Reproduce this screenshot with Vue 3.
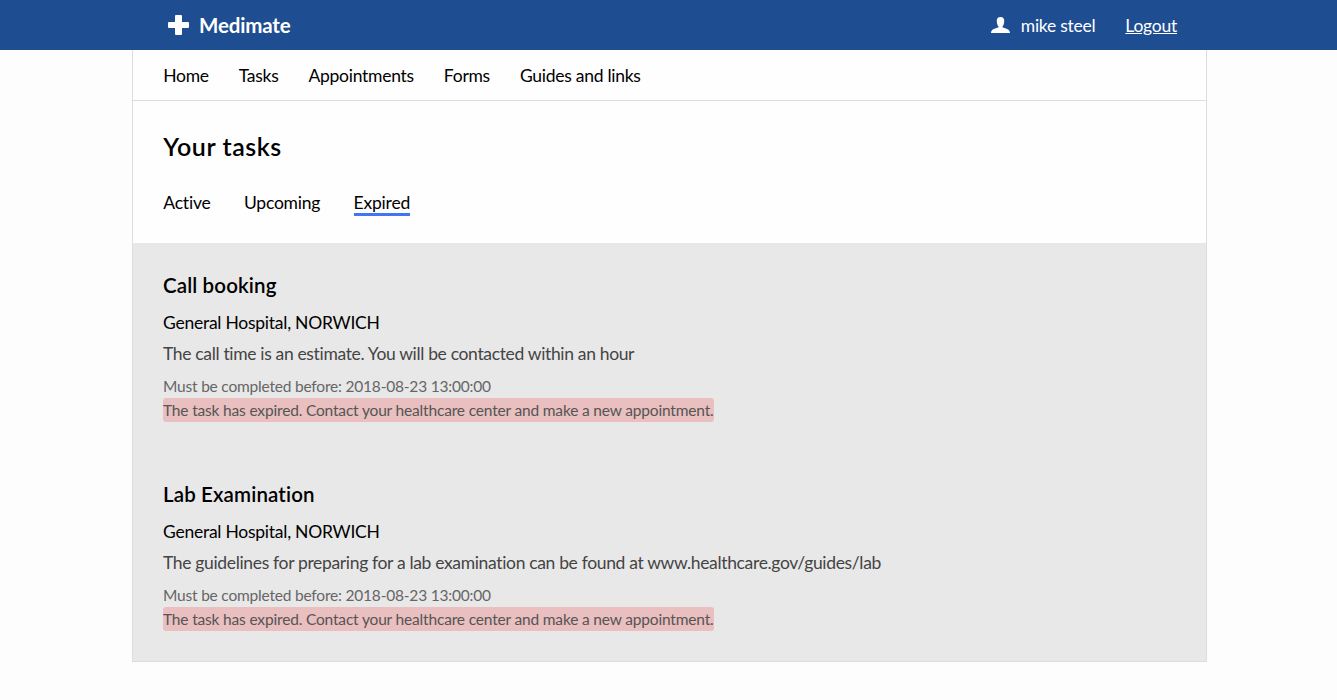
<script setup>
const links = ['Home', 'Tasks', 'Appointments', 'Forms', 'Guides and links']
const tabs = ['Active', 'Upcoming', 'Expired']
const tasks = [
  { title: 'Call booking', text: 'The call time is an estimate. You will be contacted within an hour' },
  { title: 'Lab Examination', text: 'The guidelines for preparing for a lab examination can be found at www.healthcare.gov/guides/lab' }
]
</script>

<template>
  <div class="page">
    <header class="top">
      <div class="brand">
        <svg width="21" height="20" viewBox="0 0 21 20"><path fill="#fff" d="M8 0h5q1 0 1 1v6h6q1 0 1 1v4q0 1-1 1h-6v6q0 1-1 1H8q-1 0-1-1v-6H1q-1 0-1-1V8q0-1 1-1h6V1q0-1 1-1z" /></svg>
        <span>Medimate</span>
      </div>
      <div class="user">
        <svg width="19" height="16" viewBox="0 0 19 16"><path fill="#fff" d="M9.500 0C12.300 0 13.400 1.700 13.200 4.500C13 7.200 12.500 8.400 11.600 9.300V10.500C15 11.500 19 12.200 19 16H0C0 12.200 4 11.500 7.400 10.500V9.300C6.500 8.400 6 7.200 5.800 4.500C5.600 1.700 6.700 0 9.500 0z" /></svg>
        <span>mike steel</span>
        <a class="logout">Logout</a>
      </div>
    </header>
    <main class="sheet">
      <nav class="nav"><a v-for="l in links" :key="l">{{ l }}</a></nav>
      <section class="heading">
        <h1>Your tasks</h1>
        <div class="tabs"><a v-for="t in tabs" :key="t" :class="{ active: t === 'Expired' }">{{ t }}</a></div>
      </section>
      <section class="tasks">
        <article v-for="t in tasks" :key="t.title">
          <h2>{{ t.title }}</h2>
          <p class="place">General Hospital, NORWICH</p>
          <p class="text">{{ t.text }}</p>
          <p class="due">Must be completed before: 2018-08-23 13:00:00</p>
          <p class="expired">The task has expired. Contact your healthcare center and make a new appointment.</p>
        </article>
      </section>
    </main>
  </div>
</template>

<style>
body { background: #fdfdfd; }
</style>
<style scoped>
.page { font: 17.5px/24px Lato, sans-serif; letter-spacing: -.34px; font-variant-ligatures: none; color: #000; height: 700px; overflow: hidden; white-space: nowrap; }
.page * { box-sizing: border-box; }
h1, h2, p { margin: 0; }
svg { display: block; flex: none; }
.top { height: 50px; background: #1e4d92; color: #fff; display: flex; justify-content: space-between; align-items: center; padding: 0 160px 0 168px; }
.brand, .user { display: flex; align-items: center; }
.brand { gap: 10px; font-size: 20.5px; font-weight: 700; letter-spacing: -.17px; }
.user { padding-top: 2px; letter-spacing: -.25px; }
.user svg { margin-bottom: 2px; }
.user span { margin-left: 11px; }
.logout { margin-left: 30px; text-decoration: underline; }
.sheet { width: 1075px; height: 612px; margin-left: 132px; border: 1px solid #ddd; border-top: 0; background: #fefefe; }
.nav { height: 51px; border-bottom: 1px solid #ddd; display: flex; align-items: center; gap: 30px; padding: 2px 30.2px 0; letter-spacing: -.27px; }
.heading { height: 142px; padding: 29px 30.3px 0; }
h1 { font-size: 25px; line-height: 32px; font-weight: 600; letter-spacing: .56px; }
.tabs { display: flex; gap: 33.3px; margin-top: 29px; letter-spacing: -.2px; }
.tabs a { height: 25px; }
.active { border-bottom: 3px solid #4274f6; }
.tasks { height: 418px; background: #e8e8e8; padding: 29px 30px; }
article { height: 209px; }
h2 { font-size: 20.5px; line-height: 26px; font-weight: 600; letter-spacing: .13px; }
.place { margin-top: 13px; letter-spacing: -.25px; }
.text { margin-top: 7px; color: #444; }
.due { margin-top: 8px; font-size: 15.500px; letter-spacing: -.2px; color: #666; }
.expired { width: fit-content; font-size: 15.500px; letter-spacing: -.17px; color: #555; background: #e9bfbf; border-radius: 3px; }
</style>
